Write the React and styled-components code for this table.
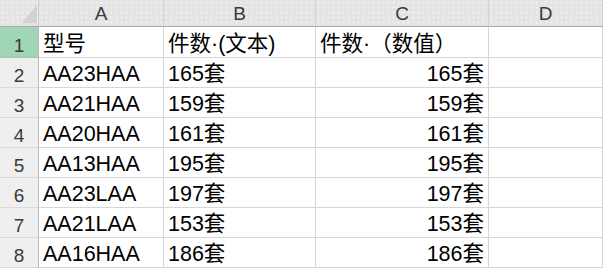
import React from "react";
import styled, { createGlobalStyle } from "styled-components";

const Global = createGlobalStyle`
  html, body { margin: 0; padding: 0; background: #ffffff; }
  body { font-family: "Liberation Sans", "Noto Sans CJK SC", sans-serif; overflow: hidden; }
`;

const Sheet = styled.div`
  display: grid;
  grid-template-columns: 39px 125px 152px 173px 1fr;
  grid-template-rows: 27px 31px repeat(7, 30px);
  width: 603px;
  height: 268px;
  overflow: hidden;
  background: #ffffff;
`;

const Corner = styled.div`
  position: relative;
  background-color: #e4e4e4;
  background-image: radial-gradient(circle, #f2f2f2 0.9px, transparent 1.1px);
  background-size: 5px 5px;
  border-right: 1px solid #cfcfcf;
  border-bottom: 1px solid #a9a9a9;
`;

const Triangle = styled.svg`
  position: absolute;
  left: 22px;
  top: 5px;
`;

const ColHead = styled.div`
  display: flex;
  align-items: flex-end;
  justify-content: center;
  padding-bottom: 3px;
  box-sizing: border-box;
  background-color: #e4e4e4;
  background-image: radial-gradient(circle, #f2f2f2 0.9px, transparent 1.1px);
  background-size: 5px 5px;
  border-right: 1px solid #d2d2d2;
  border-bottom: 1px solid #a9a9a9;
  color: #3a3a3a;
  font-size: 19px;
  line-height: 19px;
`;

const RowHead = styled.div`
  display: flex;
  align-items: flex-end;
  justify-content: center;
  padding-bottom: 2px;
  box-sizing: border-box;
  background: ${(p) => (p.$selected ? "#a0d5b6" : "#efefef")};
  border-right: 1px solid #b9b9b9;
  border-bottom: 1px solid ${(p) => (p.$selected ? "#9fc9b0" : "#dadada")};
  color: #3a3a3a;
  font-size: 19px;
  line-height: 19px;
`;

const Cell = styled.div`
  display: flex;
  align-items: flex-end;
  justify-content: ${(p) => (p.$right ? "flex-end" : "flex-start")};
  padding: 0 4px 2px 4px;
  box-sizing: border-box;
  border-right: 1px solid #d6d6d6;
  border-bottom: 1px solid #d6d6d6;
  color: #000000;
  font-size: 21.5px;
  line-height: 21px;
  white-space: nowrap;
  overflow: hidden;
  text-spacing-trim: space-all;
`;

const cols = ["A", "B", "C", "D"];

const rows = [
  ["AA23HAA", "165套", "165套"],
  ["AA21HAA", "159套", "159套"],
  ["AA20HAA", "161套", "161套"],
  ["AA13HAA", "195套", "195套"],
  ["AA23LAA", "197套", "197套"],
  ["AA21LAA", "153套", "153套"],
  ["AA16HAA", "186套", "186套"],
];

export default function App() {
  return (
    <>
      <Global />
      <Sheet>
        <Corner>
          <Triangle width="15" height="18" viewBox="0 0 15 18">
            <polygon points="15,0 15,18 0,18" fill="#d2d2d2" />
          </Triangle>
        </Corner>
        {cols.map((c) => (
          <ColHead key={c}>{c}</ColHead>
        ))}

        <RowHead $selected>1</RowHead>
        <Cell>型号</Cell>
        <Cell>件数·(文本)</Cell>
        <Cell>件数·（数值）</Cell>
        <Cell />

        {rows.map((r, i) => (
          <React.Fragment key={i}>
            <RowHead>{i + 2}</RowHead>
            <Cell>{r[0]}</Cell>
            <Cell>{r[1]}</Cell>
            <Cell $right>{r[2]}</Cell>
            <Cell />
          </React.Fragment>
        ))}
      </Sheet>
    </>
  );
}
